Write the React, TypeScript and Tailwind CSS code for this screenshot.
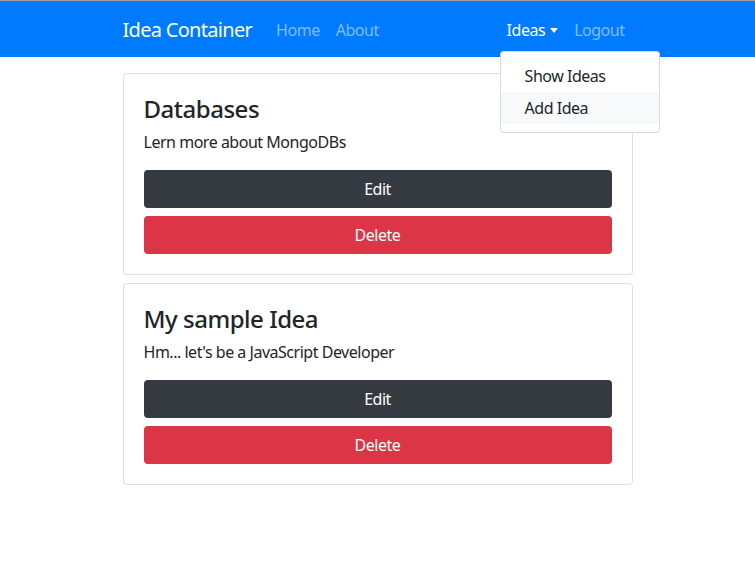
import { useState } from "react";

const ideas = [
  { id: 1, title: "Databases", details: "Lern more about MongoDBs" },
  { id: 2, title: "My sample Idea", details: "Hm... let's be a JavaScript Developer" },
];

function Navbar() {
  return (
    <nav className="border-t border-[#a0a0a0] bg-[#007bff]">
      <div className="relative mx-auto flex h-14 w-[540px] items-center px-[15px]">
        <a href="#" className="mr-4 pt-[1px] text-[20px] leading-[30px] tracking-[-0.035em] text-white">
          Idea Container
        </a>
        <ul className="flex pt-[1px]">
          <li>
            <a href="#" className="block px-2 text-white/50">Home</a>
          </li>
          <li>
            <a href="#" className="block px-2 text-white/50">About</a>
          </li>
        </ul>
        <ul className="ml-auto flex pt-[1px]">
          <li className="relative">
            <a href="#" className="flex items-center px-2 text-white">
              Ideas
              <span className="ml-[5px] mt-[1px] h-0 w-0 border-x-[4.5px] border-t-[5px] border-x-transparent border-t-white" />
            </a>
            <div className="absolute left-[1px] top-[33px] z-10 w-40 rounded border border-black/15 bg-white py-2 text-[#212529]">
              <a href="#" className="block px-6 py-1">Show Ideas</a>
              <a href="#" className="block bg-[#f8f9fa] px-6 py-1">Add Idea</a>
            </div>
          </li>
          <li>
            <a href="#" className="block px-2 text-white/50">Logout</a>
          </li>
        </ul>
      </div>
    </nav>
  );
}

function IdeaCard({ title, details }: { title: string; details: string }) {
  return (
    <div className="rounded border border-black/[0.125] bg-white p-5">
      <h4 className="mb-2 pt-[1px] text-[24px] font-medium leading-[27px]">{title}</h4>
      <p className="mb-4">{details}</p>
      <button className="block h-[38px] w-full rounded bg-[#343a40] text-white">Edit</button>
      <button className="mt-2 block h-[38px] w-full rounded bg-[#dc3545] text-white">Delete</button>
    </div>
  );
}

export default function App() {
  const [items] = useState(ideas);
  return (
    <div className="min-h-[563px] bg-white font-['Noto_Sans',sans-serif] text-base leading-6 tracking-[-0.03em] text-[#212529]">
      <Navbar />
      <div className="mx-auto w-[540px] px-[15px]">
        <div className="mt-4 flex flex-col gap-2">
          {items.map((idea) => (
            <IdeaCard key={idea.id} title={idea.title} details={idea.details} />
          ))}
        </div>
      </div>
    </div>
  );
}
